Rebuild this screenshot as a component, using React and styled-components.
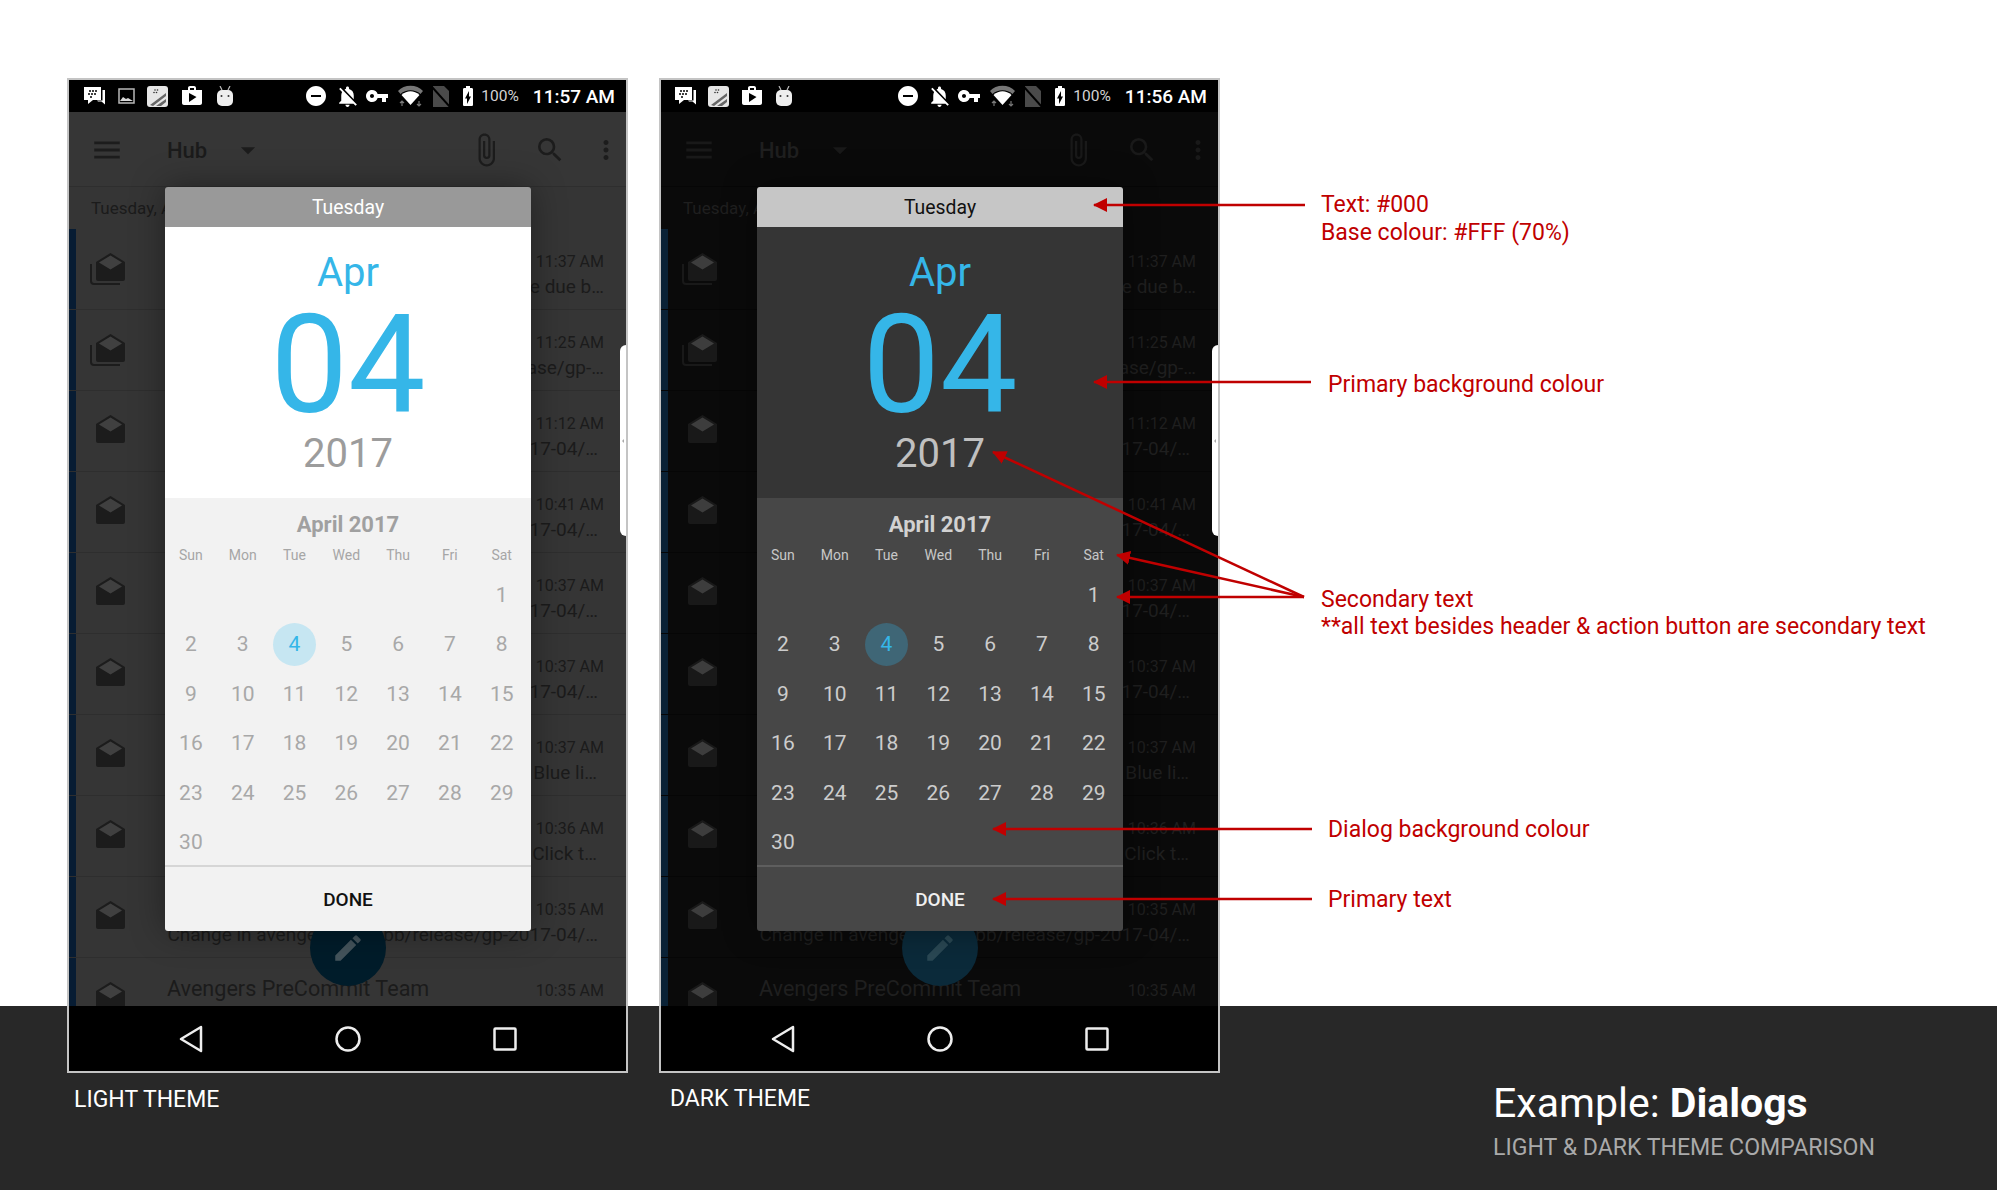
import styled, { createGlobalStyle, ThemeProvider } from 'styled-components'
import {
    MdAttachFile, MdEdit, MdMenu, MdMoreVert, MdNotificationsOff, MdRemoveCircle,
    MdSearch, MdShop, MdVpnKey, MdArrowDropDown, MdBatteryChargingFull,
} from 'react-icons/md'

const lightTheme = {
    scrim: '#353535',
    toolbar: '#363636',
    ink: '#1b1b1b',
    icon: '#1c1c1c',
    rule: '#2e2e2e',
    bar: '#071c33',
    fab: '#001c2a',
    fabIcon: '#44545c',
    header: '#999999',
    headerText: '#ffffff',
    hero: '#ffffff',
    body: '#f2f2f2',
    divider: '#d6d6d6',
    year: '#9c9c9c',
    month: '#a0a0a0',
    week: '#a6a6a6',
    day: '#a8a8a8',
    selected: '#c6e6f2',
    action: '#111111',
}

const darkTheme = {
    scrim: '#0a0a0a',
    toolbar: '#0a0a0a',
    ink: '#1f1f1f',
    icon: '#191919',
    rule: '#060606',
    bar: '#0a2236',
    fab: '#0b2a3a',
    fabIcon: '#2a4854',
    header: '#c6c6c6',
    headerText: '#111111',
    hero: '#353535',
    body: '#474747',
    divider: '#5e5e5e',
    year: '#c0c0c0',
    month: '#d2d2d2',
    week: '#c8c8c8',
    day: '#cccccc',
    selected: '#3f6676',
    action: '#f0f0f0',
}

const GlobalStyle = createGlobalStyle`
    html, body {
        margin: 0;
        padding: 0;
        background: #fff;
    }

    * {
        box-sizing: border-box;
    }
`

const Page = styled.div`
    position: relative;
    display: flex;
    width: 1997px;
    height: 1190px;
    padding: 78px 0 0 67px;
    overflow: hidden;
    font-family: Roboto, "Liberation Sans", sans-serif;
    background: linear-gradient(#fff 1006px, #282828 1006px);
`

const ThemeColumn = styled.div`
    width: 561px;
    margin-right: ${p => p.$gap}px;
`

const Phone = styled.div`
    position: relative;
    display: flex;
    flex-direction: column;
    height: 995px;
    border: 2px solid #c4c4c4;
    background: ${p => p.theme.scrim};
`

const StatusBar = styled.div`
    display: flex;
    align-items: center;
    justify-content: space-between;
    flex: none;
    height: 32px;
    padding: 0 11px 0 ${p => p.$inset}px;
    background: #000;
    color: #fff;
`

const StatusGroup = styled.div`
    display: flex;
    align-items: center;
    gap: ${p => p.$gap}px;
`

const StatusSlot = styled.span`
    display: flex;
    margin-right: ${p => p.$after || 0}px;
`

const Battery = styled.span`
    margin-left: -3.5px;
    font-size: 15.5px;
    color: #d4d4d4;
`

const Clock = styled.span`
    margin-left: 9px;
    font-size: 19px;
    font-weight: 500;
    color: #fff;
`

const Toolbar = styled.div`
    display: flex;
    align-items: center;
    flex: none;
    height: 75px;
    padding: 2px 5px 0 21px;
    background: ${p => p.theme.toolbar};
    border-bottom: 1px solid ${p => p.theme.rule};
    color: ${p => p.theme.icon};
`

const Hub = styled.span`
    margin-left: 43px;
    font-size: 22px;
    font-weight: 500;
    color: ${p => p.theme.ink};
`

const DropArrow = styled(MdArrowDropDown)`
    margin-left: 24px;
`

const ToolbarSpacer = styled.div`
    flex: 1;
`

const Search = styled(MdSearch)`
    margin: 0 25px 0 30px;
`

const DateHeader = styled.div`
    flex: none;
    height: 42px;
    padding: 11px 0 0 22px;
    font-size: 17px;
    line-height: 20px;
    color: ${p => p.theme.ink};
    white-space: nowrap;
`

const InboxList = styled.div`
    flex: 1;
    min-height: 0;
    overflow: hidden;
`

const Row = styled.div`
    display: flex;
    height: 81px;
    border-bottom: 1px solid ${p => p.theme.rule};
`

const UnreadBar = styled.div`
    flex: none;
    width: 7px;
    background: ${p => p.theme.bar};
`

const RowIcon = styled.div`
    display: flex;
    flex: none;
    justify-content: flex-end;
    width: 50px;
    padding-top: 23px;
    color: ${p => p.theme.icon};
`

const RowBody = styled.div`
    flex: 1;
    min-width: 0;
    margin-left: 41px;
    padding: 19px 22px 0 0;
    color: ${p => p.theme.ink};
`

const RowTop = styled.div`
    display: flex;
    align-items: center;
    justify-content: space-between;
    height: 26px;
`

const RowTitle = styled.span`
    margin-top: -3px;
    font-size: 21.6px;
    white-space: nowrap;
`

const RowTime = styled.span`
    font-size: 16px;
`

const Snippet = styled.div`
    padding-right: ${p => p.$inset}px;
    font-size: 19px;
    line-height: 26px;
    white-space: nowrap;
    text-align: right;
`

const NavBar = styled.div`
    display: flex;
    align-items: center;
    flex: none;
    height: 65px;
    padding-left: 110px;
    background: #000;
    color: #eee;
`

const NavButton = styled.svg`
    flex: none;
    margin-right: ${p => p.$gap}px;
`

const Fab = styled.div`
    position: absolute;
    left: 241px;
    top: 830px;
    display: flex;
    align-items: center;
    justify-content: center;
    width: 76px;
    height: 76px;
    border-radius: 50%;
    background: ${p => p.theme.fab};
    color: ${p => p.theme.fabIcon};
`

const DrawerHandle = styled.div`
    position: absolute;
    right: 0;
    top: 265px;
    display: flex;
    align-items: center;
    justify-content: center;
    width: 6px;
    height: 191px;
    border-radius: 6px 0 0 6px;
    background: #fff;

    &::after {
        content: '';
        border-style: solid;
        border-width: 2px 2px 2px 0;
        border-color: transparent #aaa transparent transparent;
    }
`

const Dialog = styled.div`
    position: absolute;
    left: 96px;
    top: 107px;
    width: 366px;
    border-radius: 3px;
    overflow: hidden;
    box-shadow: 0 0 34px rgba(0, 0, 0, 0.38);
`

const DialogHeader = styled.div`
    height: 40px;
    font-size: 19.4px;
    line-height: 42px;
    text-align: center;
    background: ${p => p.theme.header};
    color: ${p => p.theme.headerText};
`

const Hero = styled.div`
    display: flex;
    flex-direction: column;
    align-items: center;
    height: 271px;
    padding-top: 23px;
    background: ${p => p.theme.hero};
`

const HeroMonth = styled.div`
    font-size: 40px;
    line-height: 46px;
    color: #35b6e8;
`

const HeroDay = styled.div`
    margin-top: 4px;
    font-size: 138px;
    line-height: 130px;
    color: #35b6e8;
`

const HeroYear = styled.div`
    font-size: 40px;
    line-height: 48px;
    color: ${p => p.theme.year};
`

const Calendar = styled.div`
    height: 367px;
    padding-top: 13px;
    background: ${p => p.theme.body};
`

const MonthTitle = styled.div`
    font-size: 22px;
    font-weight: 700;
    line-height: 28px;
    text-align: center;
    color: ${p => p.theme.month};
`

const WeekRow = styled.div`
    display: grid;
    grid-template-columns: repeat(7, 51.8px);
    margin-top: 7px;
    font-size: 14px;
    line-height: 18px;
    text-align: center;
    color: ${p => p.theme.week};
`

const DayGrid = styled.div`
    display: grid;
    grid-template-columns: repeat(7, 51.8px);
    grid-auto-rows: 49.5px;
    margin-top: 6px;
`

const Day = styled.div`
    display: flex;
    align-items: center;
    justify-content: center;
    font-size: 21px;
    color: ${p => p.theme.day};
`

const SelectedDay = styled.span`
    display: flex;
    align-items: center;
    justify-content: center;
    width: 43px;
    height: 43px;
    border-radius: 50%;
    background: ${p => p.theme.selected};
    color: #35b6e8;
`

const DialogActions = styled.div`
    height: 66px;
    font-size: 19px;
    font-weight: 500;
    line-height: 66px;
    text-align: center;
    border-top: 2px solid ${p => p.theme.divider};
    background: ${p => p.theme.body};
    color: ${p => p.theme.action};
`

const Caption = styled.div`
    margin: ${p => p.$top}px 0 0 ${p => p.$inset}px;
    font-size: 23px;
    line-height: 27px;
    color: #fff;
`

const AnnotationColumn = styled.div`
    display: flex;
    flex-direction: column;
    margin-left: 101px;
    padding-top: 113px;
`

const Callout = styled.div`
    margin-top: ${p => p.$top}px;
    padding-left: ${p => p.$inset || 0}px;
    font-size: 23px;
    line-height: 27.5px;
    color: #c00000;
    white-space: nowrap;
`

const ExampleTitle = styled.div`
    margin-top: auto;
    padding: 0 0 0 172px;
    color: #fff;
    white-space: nowrap;
`

const ExampleHeading = styled.div`
    font-size: 41px;
    line-height: 46px;

    b {
        font-weight: 700;
    }
`

const ExampleSub = styled.div`
    margin: 8px 0 28px;
    font-size: 23.1px;
    line-height: 28px;
    color: #aaaaaa;
`

const ArrowLayer = styled.svg`
    position: absolute;
    left: 0;
    top: 0;
    pointer-events: none;
`

const BbmIcon = () => (
    <svg width="23" height="21" viewBox="0 0 23 21">
        <path d="M1 1h17v13H10l-5 4v-4H1z" fill="#fff" />
        <path d="M19.5 4H22v14.5l-3.5-3H15l-1-1h5.500z" fill="#fff" />
        <g fill="#000">
            <circle cx="7" cy="5" r="1" /><circle cx="10" cy="5" r="1" /><circle cx="13" cy="5" r="1" />
            <circle cx="6" cy="8" r="1" /><circle cx="9" cy="8" r="1" /><circle cx="12" cy="8" r="1" />
            <circle cx="8" cy="11" r="1" />
        </g>
    </svg>
)

const ImageIcon = () => (
    <svg width="17" height="16" viewBox="0 0 17 16">
        <rect x="1" y="1" width="15" height="14" fill="none" stroke="#b8b8b8" strokeWidth="1.5" />
        <path d="M2 13l3-4 3 2 2-1 5 3z" fill="#d8d8d8" />
    </svg>
)

const HubIcon = () => (
    <svg width="21" height="21" viewBox="0 0 21 21">
        <rect width="21" height="21" rx="3" fill="#e6e6e6" />
        <path d="M3 19L19 7v3L6 20zM9 20l10-7v3l-5 4z" fill="#666" />
        <g fill="#333">
            <circle cx="8" cy="4" r=".8" /><circle cx="10.500" cy="4" r=".8" />
            <circle cx="7" cy="6.500" r=".8" /><circle cx="9.500" cy="6.500" r=".8" />
        </g>
    </svg>
)

const AndroidIcon = () => (
    <svg width="18" height="20" viewBox="0 0 18 20">
        <path d="M4 0l2 4M14 0l-2 4" stroke="#bbb" strokeWidth="1.200" />
        <rect x="1" y="4" width="16" height="16" rx="5" fill="#eee" />
        <circle cx="5.500" cy="10" r="1" fill="#333" />
        <circle cx="12.500" cy="10" r="1" fill="#333" />
    </svg>
)

const WifiIcon = () => (
    <svg width="25" height="22" viewBox="0 0 25 22">
        <path d="M0 6C6-1 19-1 25 6l-2.500 3C17 4 8 4 2.500 9z" fill="#777" />
        <path d="M3.500 10C9 5 16 5 21.500 10L12.500 20z" fill="#fff" />
        <path d="M4 21v-5M2 18l2-2 2 2M21 16v5M19 19l2 2 2-2" fill="none" stroke="#777" strokeWidth="1.200" />
    </svg>
)

const NoSimIcon = () => (
    <svg width="18" height="21" viewBox="0 0 18 21">
        <path d="M1 0h11l5 5v16H1z" fill="#4a4a4a" />
        <path d="M0 1l18 20" stroke="#000" strokeWidth="2" />
    </svg>
)

const EnvelopeIcon = ({ stacked }) => (
    <svg width="36" height="34" viewBox="0 0 36 34">
        {stacked && <path d="M1 12v17a3 3 0 0 0 3 3h26" fill="none" stroke="currentColor" strokeWidth="2" />}
        <path d="M20.500 1L35 10v17a2 2 0 0 1-2 2H8a2 2 0 0 1-2-2V10z" fill="currentColor" />
        <path d="M20.500 3.500L32 10.500l-11.500 7-11.500-7z" fill="#fff" opacity="0.16" />
    </svg>
)

const StatusIcons = ({ dark, time }) => (
    <StatusBar $inset={dark ? 13 : 14}>
        <StatusGroup $gap={dark ? 11 : 12}>
            <BbmIcon />
            {!dark && <ImageIcon />}
            <HubIcon />
            <MdShop size={24} />
            <AndroidIcon />
        </StatusGroup>
        <StatusGroup $gap={5}>
            <StatusSlot $after={2}><MdRemoveCircle size={24} /></StatusSlot>
            <MdNotificationsOff size={25} />
            <StatusSlot $after={4}><MdVpnKey size={24} /></StatusSlot>
            <StatusSlot $after={3.5}><WifiIcon /></StatusSlot>
            <StatusSlot $after={1}><NoSimIcon /></StatusSlot>
            <MdBatteryChargingFull size={24} />
            <Battery>100%</Battery>
            <Clock>{time}</Clock>
        </StatusGroup>
    </StatusBar>
)

const inboxRows = [
    { time: '11:37 AM', snippet: 'e due b…', inset: 0, stacked: true },
    { time: '11:25 AM', snippet: 'ase/gp-…', inset: 0, stacked: true },
    { time: '11:12 AM', snippet: '17-04/…', inset: 6 },
    { time: '10:41 AM', snippet: '17-04/…', inset: 6 },
    { time: '10:37 AM', snippet: '17-04/…', inset: 6 },
    { time: '10:37 AM', snippet: '17-04/…', inset: 6 },
    { time: '10:37 AM', snippet: 'Blue li…', inset: 7 },
    { time: '10:36 AM', snippet: 'Click t…', inset: 7 },
    { time: '10:35 AM', snippet: 'Change in avengers/hubbbb/release/gp-2017-04/…', inset: 6 },
    { time: '10:35 AM', title: 'Avengers PreCommit Team', snippet: '', inset: 0 },
]

const weekDays = ['Sun', 'Mon', 'Tue', 'Wed', 'Thu', 'Fri', 'Sat']
const monthDays = [...Array(6).fill(''), ...Array.from({ length: 30 }, (_, i) => i + 1)]

const DateDialog = () => (
    <Dialog>
        <DialogHeader>Tuesday</DialogHeader>
        <Hero>
            <HeroMonth>Apr</HeroMonth>
            <HeroDay>04</HeroDay>
            <HeroYear>2017</HeroYear>
        </Hero>
        <Calendar>
            <MonthTitle>April 2017</MonthTitle>
            <WeekRow>
                {weekDays.map(day => <span key={day}>{day}</span>)}
            </WeekRow>
            <DayGrid>
                {monthDays.map((day, idx) => (
                    <Day key={idx}>
                        {day === 4 ? <SelectedDay>{day}</SelectedDay> : day}
                    </Day>
                ))}
            </DayGrid>
        </Calendar>
        <DialogActions>DONE</DialogActions>
    </Dialog>
)

const PhoneScreen = ({ theme, dark, time }) => (
    <ThemeProvider theme={theme}>
        <Phone>
            <StatusIcons dark={dark} time={time} />
            <Toolbar>
                <MdMenu size={34} />
                <Hub>Hub</Hub>
                <DropArrow size={34} />
                <ToolbarSpacer />
                <MdAttachFile size={36} />
                <Search size={32} />
                <MdMoreVert size={30} />
            </Toolbar>
            <DateHeader>Tuesday, A</DateHeader>
            <InboxList>
                {inboxRows.map((row, idx) => (
                    <Row key={idx}>
                        <UnreadBar />
                        <RowIcon>
                            <EnvelopeIcon stacked={row.stacked} />
                        </RowIcon>
                        <RowBody>
                            <RowTop>
                                <RowTitle>{row.title}</RowTitle>
                                <RowTime>{row.time}</RowTime>
                            </RowTop>
                            <Snippet $inset={row.inset}>{row.snippet}</Snippet>
                        </RowBody>
                    </Row>
                ))}
            </InboxList>
            <NavBar>
                <NavButton $gap={132} width="24" height="28" viewBox="0 0 24 28">
                    <path d="M22 2L2 14l20 12z" fill="none" stroke="currentColor" strokeWidth="2.500" strokeLinejoin="round" />
                </NavButton>
                <NavButton $gap={132} width="26" height="26" viewBox="0 0 26 26">
                    <circle cx="13" cy="13" r="11.500" fill="none" stroke="currentColor" strokeWidth="2.500" />
                </NavButton>
                <NavButton $gap={0} width="24" height="24" viewBox="0 0 24 24">
                    <rect x="1.500" y="1.500" width="21" height="21" rx="1" fill="none" stroke="currentColor" strokeWidth="2.500" />
                </NavButton>
            </NavBar>
            <Fab>
                <MdEdit size={34} />
            </Fab>
            <DrawerHandle />
            <DateDialog />
        </Phone>
    </ThemeProvider>
)

const arrows = [
    { x1: 1305, y1: 205, x2: 1094, y2: 205 },
    { x1: 1311, y1: 382, x2: 1094, y2: 382 },
    { x1: 1304, y1: 597, x2: 993, y2: 452 },
    { x1: 1304, y1: 597, x2: 1117, y2: 555 },
    { x1: 1304, y1: 597, x2: 1117, y2: 597 },
    { x1: 1312, y1: 829, x2: 993, y2: 829 },
    { x1: 1312, y1: 899, x2: 993, y2: 899 },
]

const App = () => (
    <Page>
        <GlobalStyle />
        <ThemeColumn $gap={31}>
            <PhoneScreen theme={lightTheme} time="11:57 AM" />
            <Caption $top={13} $inset={7}>LIGHT THEME</Caption>
        </ThemeColumn>
        <ThemeColumn $gap={0}>
            <PhoneScreen theme={darkTheme} dark time="11:56 AM" />
            <Caption $top={12} $inset={11}>DARK THEME</Caption>
        </ThemeColumn>
        <AnnotationColumn>
            <Callout $top={0}>Text: #000<br />Base colour: #FFF (70%)</Callout>
            <Callout $top={125} $inset={7}>Primary background colour</Callout>
            <Callout $top={187}>Secondary text<br />**all text besides header &amp; action button are secondary text</Callout>
            <Callout $top={175} $inset={7}>Dialog background colour</Callout>
            <Callout $top={43} $inset={7}>Primary text</Callout>
            <ExampleTitle>
                <ExampleHeading>Example: <b>Dialogs</b></ExampleHeading>
                <ExampleSub>LIGHT &amp; DARK THEME COMPARISON</ExampleSub>
            </ExampleTitle>
        </AnnotationColumn>
        <ArrowLayer width="1997" height="1190" viewBox="0 0 1997 1190">
            <defs>
                <marker id="arrow-head" markerUnits="userSpaceOnUse" markerWidth="14" markerHeight="14" refX="13" refY="7" orient="auto">
                    <path d="M0 0L14 7L0 14z" fill="#c00000" />
                </marker>
            </defs>
            {arrows.map((line, idx) => (
                <line key={idx} {...line} stroke="#c00000" strokeWidth="2.500" markerEnd="url(#arrow-head)" />
            ))}
        </ArrowLayer>
    </Page>
)

export default App
